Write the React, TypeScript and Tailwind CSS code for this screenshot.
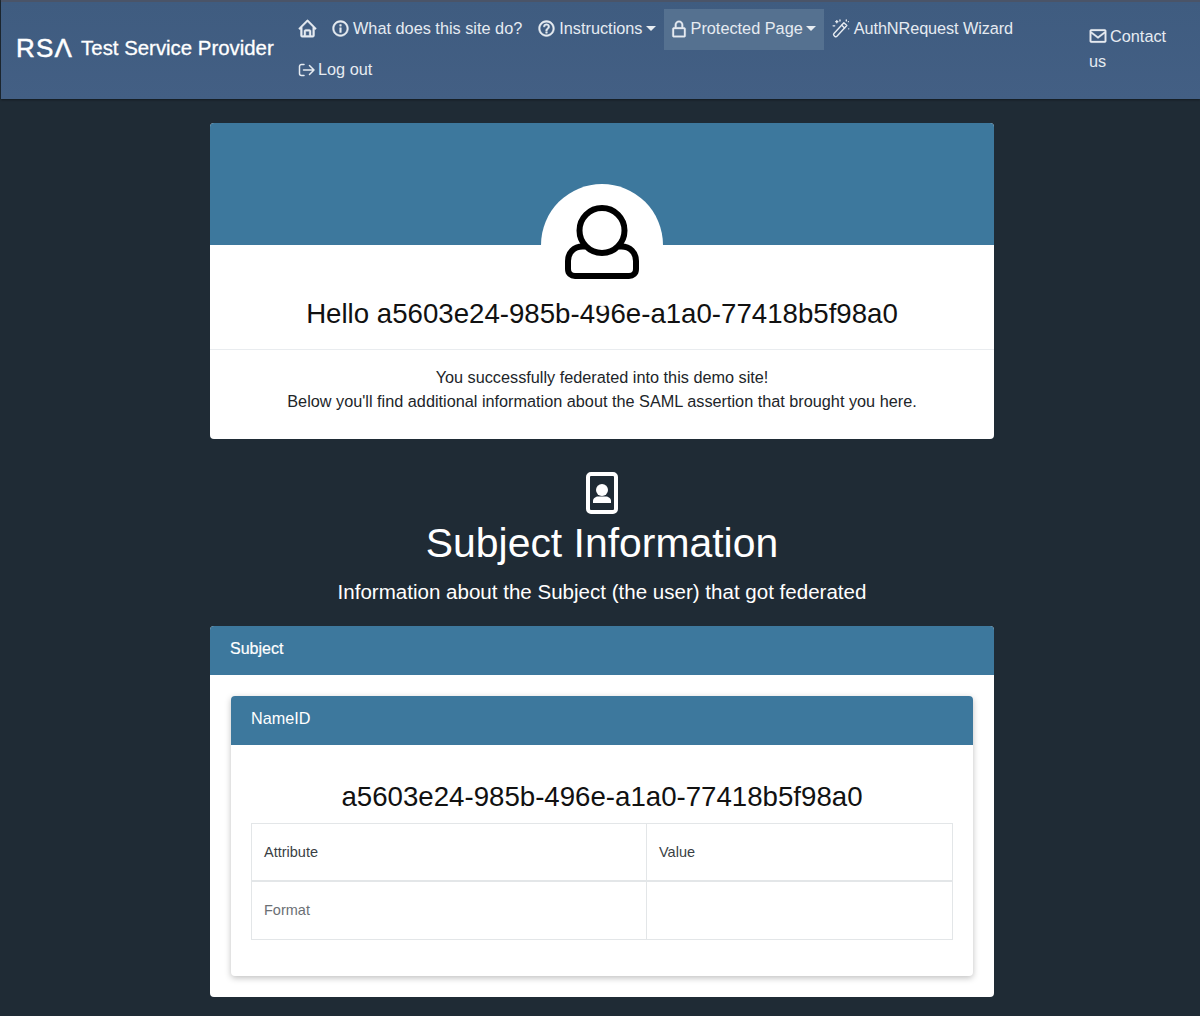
import React from "react";
import { BiHome, BiInfoCircle, BiHelpCircle, BiLockAlt, BiEnvelope } from "react-icons/bi";

function Wand() {
  return (
    <svg width="19" height="19" viewBox="0 0 18 18" fill="none" stroke="currentColor" strokeWidth="1.3" strokeLinecap="round" strokeLinejoin="round" className="-ml-[1px] shrink-0">
      <path d="M12.200 3.600 15 6.200 5.600 16.400a1.300 1.300 0 0 1-1.900.1l-.9-.9a1.300 1.300 0 0 1 0-1.800z" />
      <path d="M10.100 5.900 12.900 8.600" />
      <path d="M5.500 1.500v2M4.500 2.500h2M8.500 1v1M16.500 2.500v.01M16.800 9.300v.01M2 6.500h1.500M14.500 1v.8" />
    </svg>
  );
}

function LogOutIcon() {
  return (
    <svg width="18" height="16" viewBox="0 0 18 16" fill="none" stroke="currentColor" strokeWidth="1.5" strokeLinecap="round" strokeLinejoin="round">
      <path d="M6 2.500H3.500A2 2 0 0 0 1.500 4.500v7a2 2 0 0 0 2 2H6" />
      <path d="M5.500 8H16M11.500 3.500 16 8l-4.500 4.500" />
    </svg>
  );
}

function Caret() {
  return <span className="ml-[3px] inline-block h-0 w-0 border-x-[5px] border-t-[5px] border-x-transparent border-t-[#e8edf2] align-[3px]" />;
}

function NavItem({ icon, box, label, caret, active, tight }: { icon: React.ReactNode; box: string; label?: string; caret?: boolean; active?: boolean; tight?: boolean }) {
  return (
    <div className={`flex h-[41px] items-center whitespace-nowrap px-[8px] pb-[2px] text-[16.3px] text-[#e6ebf1] ${active ? "bg-[#557190]" : ""} ${tight ? "tracking-[-0.1px]" : ""}`}>
      <span className={`flex ${box} items-center`}>{icon}</span>
      {label && <span>{label}</span>}
      {caret && <Caret />}
    </div>
  );
}

function Cell({ children, muted }: { children?: React.ReactNode; muted?: boolean }) {
  return <div className={`flex items-center px-[12px] text-[14.5px] ${muted ? "text-[#6b7075]" : "pt-[2px] text-[#3a3f44]"}`}>{children}</div>;
}

export default function App() {
  return (
    <div className="min-h-[1016px] overflow-hidden bg-[#1f2b35] font-['Liberation_Sans',Arial,sans-serif]">
      <header className="ml-[1px] flex h-[99px] items-start border-t-2 border-[#4a5468] bg-gradient-to-b from-[#3f5c80] to-[#435f84] shadow-[0_1px_2px_rgba(0,0,0,0.4)]">
        <div className="ml-[15px] mt-[31px] flex w-[274px] shrink-0 items-center">
          <span className="text-[26px] leading-[30px] tracking-[1.2px] text-white [-webkit-text-stroke:0.5px_white]">RS&Lambda;</span>
          <span className="ml-[8px] text-[20.4px] leading-[30px] text-white [-webkit-text-stroke:0.3px_white]">Test Service Provider</span>
        </div>
        <nav className="mt-[7px] flex w-[750px] flex-wrap content-start">
          <NavItem box="w-[18px]" icon={<BiHome size={21} stroke="currentColor" strokeWidth={0.5} className="-ml-[1px] shrink-0" />} />
          <NavItem box="w-[21px]" icon={<BiInfoCircle size={19} stroke="currentColor" strokeWidth={0.6} className="-ml-[1px] shrink-0" />} label="What does this site do?" />
          <NavItem box="w-[21px]" icon={<BiHelpCircle size={19} stroke="currentColor" strokeWidth={0.6} className="-ml-[1px] shrink-0" />} label="Instructions" caret />
          <NavItem box="w-[19px]" icon={<BiLockAlt size={20} stroke="currentColor" strokeWidth={0.4} className="-ml-[3px] shrink-0" />} label="Protected Page" caret active />
          <NavItem box="w-[22px]" icon={<Wand />} label="AuthNRequest Wizard" tight />
          <NavItem box="w-[20px]" icon={<LogOutIcon />} label="Log out" />
        </nav>
        <div className="ml-[49px] mt-[22px] w-[90px] text-[16.3px] leading-[25px] text-[#e6ebf1]">
          <BiEnvelope size={20} stroke="currentColor" strokeWidth={0.3} className="mr-[2px] -ml-[1px] inline-block align-[-4px]" />
          Contact us
        </div>
      </header>

      <main className="ml-[210px] w-[784px] pt-[24px]">
        <section className="relative h-[316px] overflow-hidden rounded-[4px] bg-white">
          <div className="h-[122px] bg-[#3d789d]" />
          <div className="absolute left-[331px] top-[61px] flex h-[122px] w-[122px] justify-center rounded-full bg-white pt-[21px]">
            <svg width="74" height="74" viewBox="0 0 74 74" fill="none" stroke="#000" strokeWidth="6" strokeLinejoin="round">
              <circle cx="37" cy="25.500" r="22.500" />
              <path d="M20 41.500h-2.500C9 41.500 3 47.500 3 56v8c0 4.500 3 7 7 7h54c4 0 7-2.500 7-7v-8c0-8.500-6-14.500-14.500-14.500H54" />
            </svg>
          </div>
          <h1 className="mt-[52px] text-center text-[27.65px] leading-[34px] text-[#111]">Hello a5603e24-985b-496e-a1a0-77418b5f98a0</h1>
          <div className="mt-[18px] border-t border-[#e9ecef] pt-[15px] text-center text-[16.25px] leading-[24px] text-[#212529]">
            <p>You successfully federated into this demo site!</p>
            <p>Below you'll find additional information about the SAML assertion that brought you here.</p>
          </div>
        </section>

        <section className="flex flex-col items-center pt-[33px] text-white">
          <svg width="32" height="42" viewBox="0 0 32 42" className="-ml-[1px]">
            <rect x="2" y="2" width="28" height="38" rx="3" fill="none" stroke="#fff" strokeWidth="4" />
            <circle cx="16" cy="18" r="6" fill="#fff" />
            <path d="M7 31v-2c0-3 3-4.500 5-4.500h8c2 0 5 1.500 5 4.500v2z" fill="#fff" />
          </svg>
          <h2 className="mt-[5px] text-[40.9px] font-normal leading-[48px]">Subject Information</h2>
          <p className="mt-[13px] text-[20.55px] leading-[24px]">Information about the Subject (the user) that got federated</p>
        </section>

        <section className="mt-[22px] h-[371px] rounded-[4px] bg-white">
          <div className="flex h-[49px] items-center rounded-t-[4px] bg-[#3d789d] px-[20px] pb-[4px] text-[16px] text-white [-webkit-text-stroke:0.2px_white]">Subject</div>
          <div className="px-[21px] pt-[21px]">
            <div className="h-[280px] rounded-[4px] bg-white shadow-[0_2px_6px_rgba(0,0,0,0.25)]">
              <div className="flex h-[49px] items-center rounded-t-[4px] bg-[#3d789d] px-[20px] pb-[4px] text-[16.2px] text-white">NameID</div>
              <div className="px-[20px]">
                <h3 className="mt-[36px] text-center text-[27.65px] leading-[32px] text-[#111]">a5603e24-985b-496e-a1a0-77418b5f98a0</h3>
                <div className="mt-[10px] grid h-[117px] grid-cols-[395px_1fr] grid-rows-[58px_57px] border border-[#e3e6e8]">
                  <div className="flex border-b-2 border-r border-[#e3e6e8]"><Cell>Attribute</Cell></div>
                  <div className="flex border-b-2 border-[#e3e6e8]"><Cell>Value</Cell></div>
                  <div className="flex border-r border-[#e3e6e8]"><Cell muted>Format</Cell></div>
                  <div />
                </div>
              </div>
            </div>
          </div>
        </section>
      </main>
    </div>
  );
}
